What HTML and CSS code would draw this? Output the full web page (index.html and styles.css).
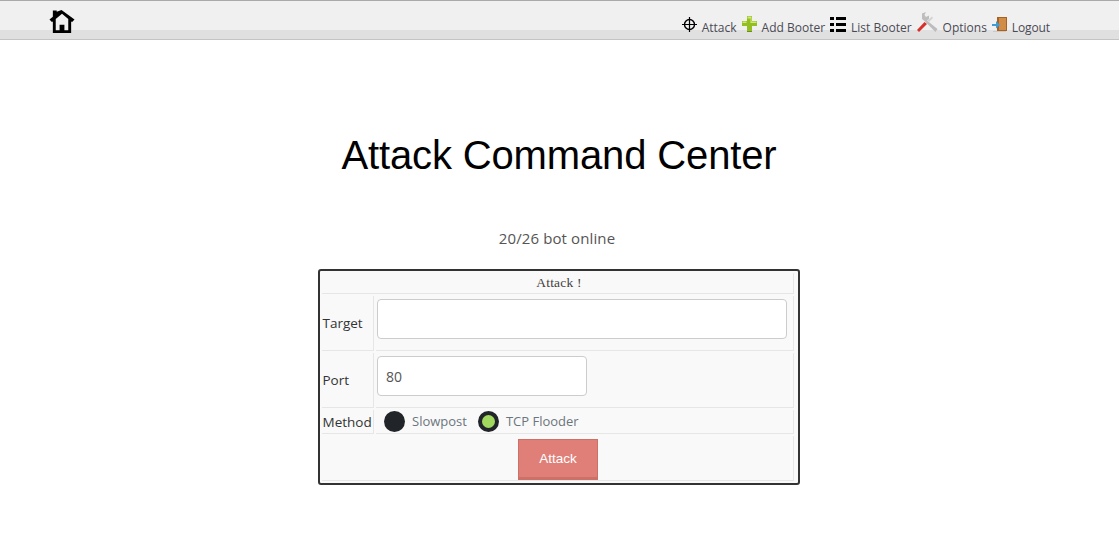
FILE: index.html
```html
<!DOCTYPE html>
<html lang="en">
<head>
<meta charset="utf-8">
<title>Attack Command Center</title>
<link rel="stylesheet" href="styles.css">
</head>
<body>
<header class="topbar">
  <a class="home" href="#" aria-label="Home">
    <svg viewBox="0 0 27 25" width="26" height="25"><path fill-rule="evenodd" fill="#000" d="M4 1H8V2.500L13 .5 26.500 10.500 24 13 23 12.500V24.500H4V12.500L3 13 .5 10.500 4 7.500ZM13.500 4.500 7 10V21.500H11V16H16V21.500H20V10Z"/></svg>
  </a>
  <nav class="menu">
    <a class="item" href="#"><svg class="ico" viewBox="0 0 15 15" width="15" height="15"><circle cx="7.500" cy="7.500" r="5" fill="none" stroke="#000" stroke-width="1.400"/><path d="M7.500 0v15M0 7.500h15" stroke="#000" stroke-width="1.200"/></svg><span class="lbl">Attack</span></a>
    <a class="item" href="#"><svg class="ico" viewBox="0 0 15 16" width="15" height="16"><path d="M5 0h5v5h5v5h-5v6H5v-6H0V5h5z" fill="#93bf22"/><path d="M5.500.5h4v5h5v1.500h-6V2.500h-3zM.5 5.500h4V7h-4z" fill="#cfe878"/><path d="M5 15h5v1H5z" fill="#6d8f18"/></svg><span class="lbl">Add Booter</span></a>
    <a class="item" href="#"><svg class="ico" viewBox="0 0 16 15" width="16" height="15"><path d="M0 0h4v3H0zM6 0h10v3H6zM0 6h4v3H0zM6 6h10v3H6zM0 12h4v3H0zM6 12h10v3H6z" fill="#000"/></svg><span class="lbl">List Booter</span></a>
    <a class="item" href="#"><svg class="ico" viewBox="0 0 21 20" width="21" height="20"><path d="M5 1.500 9 0 7.500 3 9 5 12 3.500 12 7 10 8.500 20.500 17 18.500 20 7.500 9 5 7Z" fill="#bdbdbd"/><path d="M0 18 7.500 10 10 12 2 20Z" fill="#d8302c"/><path d="M10.500 8.500 15 4.500 16 6 12 10Z" fill="#d2d2d2"/></svg><span class="lbl">Options</span></a>
    <a class="item" href="#"><svg class="ico" viewBox="0 0 15 15" width="15" height="15"><path d="M5 0h10v14H5z" fill="#a8621f"/><path d="M7 1h7v12H7z" fill="#d18d48"/><path d="M0 7h4V4l4 4-4 3.500V9H0z" fill="#3d9bd8"/><path d="M1 14h13v1H1z" fill="#c9c9c9"/></svg><span class="lbl tight">Logout</span></a>
  </nav>
</header>
<main class="page">
  <h1 class="title">Attack Command Center</h1>
  <p class="status">20/26 bot online</p>
  <form class="panel">
    <table class="grid">
      <colgroup><col class="col-label"><col></colgroup>
      <tr><th class="head" colspan="2">Attack !</th></tr>
      <tr class="r-input">
        <td class="label">Target</td>
        <td class="field"><input class="box box-wide" type="text"></td>
      </tr>
      <tr class="r-input">
        <td class="label">Port</td>
        <td class="field"><input class="box box-port" type="text" value="80"></td>
      </tr>
      <tr class="r-method">
        <td class="label">Method</td>
        <td class="methods">
          <div class="radios">
            <label class="radio"><span class="dot"></span><span class="opt">Slowpost</span></label>
            <label class="radio"><span class="dot on"></span><span class="opt">TCP Flooder</span></label>
          </div>
        </td>
      </tr>
      <tr class="r-action"><td class="actions" colspan="2"><button class="go" type="button">Attack</button></td></tr>
    </table>
  </form>
</main>
</body>
</html>
```
FILE: styles.css
```css
* { box-sizing: border-box; }
html, body { margin: 0; padding: 0; background: #fff; }
body { font-family: "Open Sans", "Noto Sans", sans-serif; color: #212529; }
.topbar {
  height: 40px;
  border-top: 1px solid #a9a9a9;
  border-bottom: 1px solid #c4c4c4;
  background: linear-gradient(#f0f0f0 0, #f0f0f0 29px, #e0e0e0 29px, #e0e0e0 100%);
  display: flex;
  justify-content: space-between;
  padding: 0 69px 0 49px;
}
.home { display: block; height: 25px; margin-top: 8px; }
.menu { display: flex; align-items: flex-end; gap: 5px; padding-bottom: 3px; }
.item { display: flex; align-items: flex-end; color: #4a4a55; text-decoration: none; font-size: 12px; line-height: 16px; }
.ico { display: block; margin-bottom: 4px; flex: none; }
.lbl { margin-left: 5px; }
.lbl.tight { letter-spacing: -.12px; }
.page { display: flex; flex-direction: column; align-items: center; padding-right: 1px; }
.title { margin: 89px 0 0; font: 400 40px/52px "Liberation Sans", Arial, sans-serif; letter-spacing: -.14px; color: #000; }
.status { margin: 46px 4px 0 0; font-size: 15px; line-height: 22px; letter-spacing: .12px; color: #555; }
.panel { margin-top: 20px; margin-right: 1px; width: 482px; height: 216px; border: 2px solid #333; border-radius: 3px; background: #f9f9f9; padding-right: 2px; }
.grid { border-collapse: separate; border-spacing: 2px; width: 476px; height: 212px; table-layout: fixed; font-size: 13.500px; }
.col-label { width: 52px; }
.grid td, .grid th { padding: 0; border-right: 1px solid #e6e6e6; border-bottom: 1px solid #e6e6e6; }
.grid .head { height: 21px; padding-left: 4px; font: 400 13.500px "Liberation Serif", serif; letter-spacing: .2px; color: #44403c; text-align: center; }
.r-input { height: 55px; }
.r-method { height: 24px; }
.r-action { height: 45px; }
.grid .label { padding-left: 1px; color: #333; }
.grid .field { padding: 3px 0 0 1px; vertical-align: top; }
.box { display: block; height: 40px; border: 1px solid #ccc; border-radius: 4px; background: #fff; padding: 0 8.500px; font: 14px "Open Sans", sans-serif; color: #555; }
.box-wide { width: 410px; }
.box-port { width: 210px; }
.radios { display: flex; gap: 11px; padding-left: 8px; font-size: 13px; color: #6c757d; }
.radio { display: flex; align-items: center; }
.opt { padding-bottom: 2px; }
.dot { width: 21px; height: 21px; border-radius: 50%; background: #212529; margin-right: 7.500px; }
.dot.on { background: #a0d860; border: 4px solid #212529; margin-right: 7px; }
.grid .actions { text-align: center; vertical-align: top; padding: 3px 0 0 2px; }
.go { display: block; width: 80px; height: 41px; margin: 0 auto; border: 1px solid #cc7068; border-bottom-width: 3px; border-radius: 0; background: #e07f78; color: #fff; font: 13.500px "Liberation Sans", Arial, sans-serif; }
```
